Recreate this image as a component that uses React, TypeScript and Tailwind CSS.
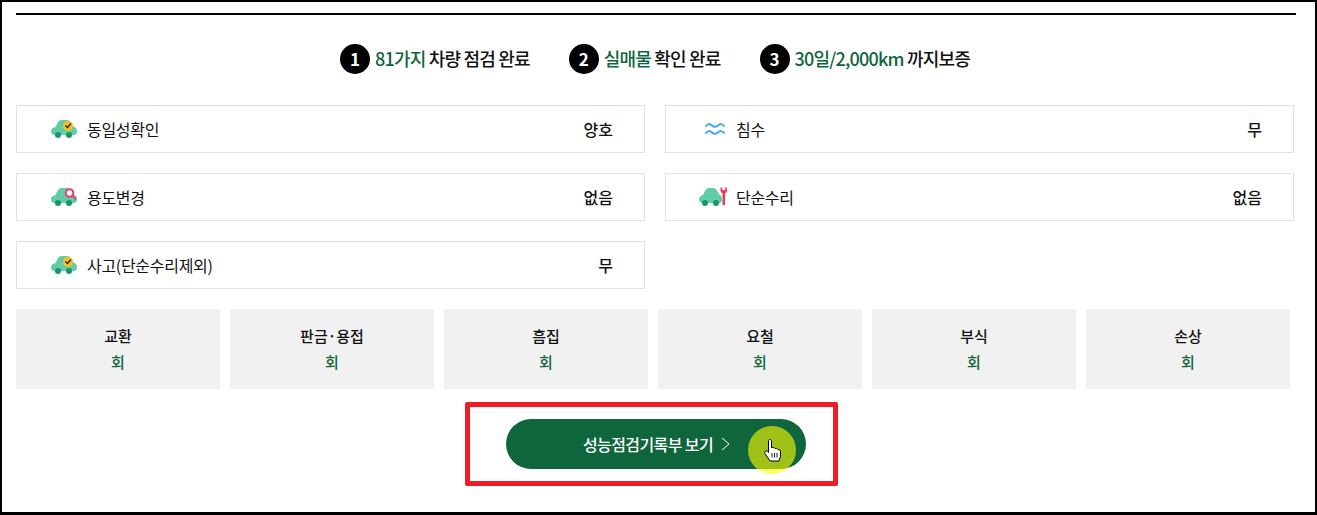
const green = "text-[#0f653c]";

function CarBody({ children }: { children?: React.ReactNode }) {
  return (
    <svg className="mr-[1px]" width="28" height="20" viewBox="0 0 28 20">
      <path d="M1 12C1 10 3 8.500 5.500 8L8 3C8.700 1.700 10 1 11.500 1H17C18.800 1 20 2 21 3.500L23.500 7.500C25.800 8.200 27 10 27 12.500C27 15 25.500 16 23.500 16H4.500C2.500 16 1 14.500 1 12Z" fill="#62cda4" />
      <circle cx="8" cy="16" r="3" fill="#1b9473" />
      <circle cx="19" cy="16" r="3" fill="#1b9473" />
      {children}
    </svg>
  );
}

function CheckCar() {
  return (
    <CarBody>
      <circle cx="18" cy="7" r="5" fill="#f6c21c" />
      <path d="M15.500 6.500L17.500 8.500L21 4.500" fill="none" stroke="#222" strokeWidth="1.400" />
    </CarBody>
  );
}

function SearchCar() {
  return (
    <CarBody>
      <circle cx="19.500" cy="6" r="3.800" fill="#fff" stroke="#ec3b6b" strokeWidth="2" />
      <path d="M22.500 9L26 12" stroke="#ec3b6b" strokeWidth="2" />
    </CarBody>
  );
}

function RepairCar() {
  return (
    <svg width="30" height="20" viewBox="0 0 30 20">
      <path d="M1 12C1 10 3 8.500 5 8L7.500 3C8.200 1.700 9.500 1 11 1H15C16.800 1 18 2 19 3.500L21.500 7.500C23 8.200 24 10 24 12.500C24 15 23 16 21.500 16H4.500C2.500 16 1 14.500 1 12Z" fill="#62cda4" />
      <circle cx="7" cy="16" r="3" fill="#1b9473" />
      <circle cx="18" cy="16" r="3" fill="#1b9473" />
      <path d="M22.500 0.500V3.500C22.500 5 23.500 6 24.500 6.300V18H27V6.300C28 6 29 5 29 3.500V0.500L27.300 0.500V3H24.200V0.500Z" fill="#ec3b5f" />
    </svg>
  );
}

function WaveIcon() {
  return (
    <svg className="mr-[3px]" width="20" height="14" viewBox="0 0 20 14" fill="none" stroke="#42a5f5" strokeWidth="2">
      <path d="M0.500 4.500C3 1.500 5 1.500 7 3.500C8.500 5 11 5 13 3.500C15 1.500 17 1.500 19.500 4.500" />
      <path d="M0.500 11.500C3 8.500 5 8.500 7 10.500C8.500 12 11 12 13 10.500C15 8.500 17 8.500 19.500 11.500" />
    </svg>
  );
}

function HandCursor() {
  return (
    <svg width="18" height="23" viewBox="0 0 18 23">
      <path
        d="M4.500 2C4.500 0 7.500 0 7.500 2V8.500L9.500 8.500C10.300 8.500 10.800 9 11 9.500L12.500 9.500C13.300 9.500 13.800 10 14 10.500C15.500 10.500 16.500 11.500 16.500 13V17.500L15 22H6L1 14.500C0 12.500 2 11 3.500 12.500L4.500 13.500Z"
        fill="#fff"
        stroke="#000"
        strokeWidth="1"
      />
      <path d="M8 14V18.500M10.500 14V18.500M13 14V18.500" stroke="#000" strokeWidth="0.900" />
    </svg>
  );
}

function Step({ num, accent, rest }: { num: number; accent: string; rest: string }) {
  return (
    <div className="flex items-center gap-[5px]">
      <span className="flex h-[30px] w-[30px] items-center justify-center rounded-full bg-black text-[17px] font-bold text-white">
        {num}
      </span>
      <span className="relative top-[-1px] text-[18px] font-medium tracking-[-0.8px] text-[#111]">
        <span className={green}>{accent}</span> {rest}
      </span>
    </div>
  );
}

function InfoRow({ icon, label, value }: { icon: React.ReactNode; label: string; value: string }) {
  return (
    <div className="flex h-12 w-[629px] items-center border border-[#e2e2e2] pr-[31px] text-[16px] text-[#111]">
      <span className="flex w-[70px] shrink-0 justify-end pr-[8px]">{icon}</span>
      <span className="tracking-[-0.3px]">{label}</span>
      <span className="ml-auto font-medium">{value}</span>
    </div>
  );
}

function StatBox({ label }: { label: string }) {
  return (
    <div className="flex h-20 w-[204px] flex-col items-center justify-center gap-[5px] bg-[#f1f1f1] text-[15px] font-medium leading-5">
      <span className="relative top-[-1px] text-[#111]">{label}</span>
      <span className={green}>회</span>
    </div>
  );
}

const stats = ["교환", "판금·용접", "흠집", "요철", "부식", "손상"];

export default function App() {
  return (
    <div className="box-border h-[515px] w-[1317px] overflow-hidden border-x-2 border-t-2 border-b-[3px] border-black bg-white px-[14px] pt-[11px] font-['Noto_Sans_CJK_KR','Noto_Sans',sans-serif]">
      <div className="h-[2px] w-[1280px] bg-black" />

      <div className="mt-[29px] flex h-[30px] items-center pl-[324px]">
        <Step num={1} accent="81가지" rest="차량 점검 완료" />
        <div className="w-[39px]" />
        <Step num={2} accent="실매물" rest="확인 완료" />
        <div className="w-[39px]" />
        <Step num={3} accent="30일/2,000km" rest="까지보증" />
      </div>

      <div className="mt-[31px] grid w-[1278px] grid-cols-[629px_629px] gap-x-[20px] gap-y-[20px]">
        <InfoRow icon={<CheckCar />} label="동일성확인" value="양호" />
        <InfoRow icon={<WaveIcon />} label="침수" value="무" />
        <InfoRow icon={<SearchCar />} label="용도변경" value="없음" />
        <InfoRow icon={<RepairCar />} label="단순수리" value="없음" />
        <InfoRow icon={<CheckCar />} label="사고(단순수리제외)" value="무" />
      </div>

      <div className="mt-5 flex gap-[10px]">
        {stats.map((s) => (
          <StatBox key={s} label={s} />
        ))}
      </div>

      <div className="mt-[13px] ml-[449px] flex h-[84px] w-[373px] items-center justify-center rounded-[2px] border-[5px] border-[#ee1c25]">
        <div className="relative ml-[9px] flex h-[50px] w-[300px] items-center rounded-full bg-[#0f653c] pl-[77px] text-[16px] font-medium tracking-[-0.6px] text-white">
          성능점검기록부 보기
          <svg className="ml-[8px]" width="9" height="14" viewBox="0 0 9 14" fill="none" stroke="#fff" strokeWidth="1">
            <path d="M1 1L8 7L1 13" />
          </svg>
          <span className="absolute left-[242px] top-[7px] h-12 w-12 rounded-full bg-[#ffff00]/60" />
          <span className="absolute left-[258px] top-[20px] flex">
            <HandCursor />
          </span>
        </div>
      </div>
    </div>
  );
}
